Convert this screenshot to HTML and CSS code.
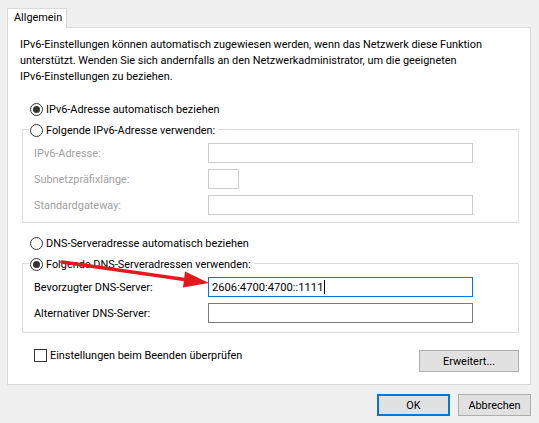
FILE: index.html
```html
<!DOCTYPE html>
<html lang="de">
<head>
  <meta charset="UTF-8">
  <title>Eigenschaften von Internetprotokoll, Version 6 (TCP/IPv6)</title>
  <link rel="stylesheet" href="styles.css">
</head>
<body>
  <div class="dialog">
    <div class="tabs">
      <div class="tab">Allgemein</div>
    </div>

    <div class="panel">
      <p class="intro">
        IPv6-Einstellungen können automatisch zugewiesen werden, wenn das Netzwerk diese Funktion<br>
        unterstützt. Wenden Sie sich andernfalls an den Netzwerkadministrator, um die geeigneten<br>
        IPv6-Einstellungen zu beziehen.
      </p>

      <div class="option first"><span class="radio checked"></span>IPv6-Adresse automatisch beziehen</div>

      <div class="group">
        <div class="option legend"><span class="radio"></span>Folgende IPv6-Adresse verwenden:</div>
        <div class="field disabled">
          <span class="field-label">IPv6-Adresse:</span>
          <span class="input"></span>
        </div>
        <div class="field disabled">
          <span class="field-label">Subnetzpräfixlänge:</span>
          <span class="input short"></span>
        </div>
        <div class="field disabled">
          <span class="field-label">Standardgateway:</span>
          <span class="input"></span>
        </div>
      </div>

      <div class="option dns"><span class="radio"></span>DNS-Serveradresse automatisch beziehen</div>

      <div class="group last">
        <div class="option legend"><span class="radio checked"></span>Folgende DNS-Serveradressen verwenden:</div>
        <div class="field">
          <span class="field-label">Bevorzugter DNS-Server:</span>
          <span class="input focused">2606:4700:4700::1111<span class="caret"></span></span>
        </div>
        <div class="field">
          <span class="field-label">Alternativer DNS-Server:</span>
          <span class="input active"></span>
        </div>
      </div>

      <div class="bottom-row">
        <div class="check"><span class="checkbox"></span>Einstellungen beim Beenden überprüfen</div>
        <button class="btn advanced">Erweitert...</button>
      </div>
    </div>

    <div class="actions">
      <button class="btn default">OK</button>
      <button class="btn">Abbrechen</button>
    </div>
  </div>

  <!-- annotation arrow pointing at the preferred DNS field -->
  <svg class="arrow" width="539" height="423" viewBox="0 0 539 423">
    <line x1="62" y1="262" x2="188" y2="280" stroke="#e3191f" stroke-width="3.5" stroke-linecap="round"/>
    <polygon points="185,271.5 209,283 183,287.5" fill="#e3191f"/>
  </svg>
</body>
</html>
```

FILE: styles.css
```css
* {
  margin: 0;
  padding: 0;
  box-sizing: border-box;
}

body {
  width: 539px;
  height: 423px;
  background: #f0f0f0;
  font-family: Roboto, "Open Sans", sans-serif;
  font-size: 10.9px;
  color: #000;
  position: relative;
  overflow: hidden;
}

.dialog {
  padding: 8px 8px 0 7px;
}

/* Tab strip */
.tabs {
  display: flex;
  position: relative;
  z-index: 1;
  margin-bottom: -1px;
}

.tab {
  width: 60px;
  height: 20px;
  background: #fff;
  border: 1px solid #d9d9d9;
  border-bottom: none;
  padding-left: 6px;
  line-height: 18px;
}

/* White property page */
.panel {
  background: #fff;
  border: 1px solid #d9d9d9;
  width: 524px;
  padding: 0 11px 12px 14px;
}

.intro {
  margin: 9px 0 0 -2px;
  line-height: 16px;
}

.option {
  display: flex;
  align-items: center;
  height: 16px;
  padding-left: 8px;
}

.option.first {
  margin-top: 16px;
}

.option.dns {
  margin-top: 12px;
}

.radio {
  width: 13px;
  height: 13px;
  border: 1px solid #333;
  border-radius: 50%;
  background: #fff;
  margin-right: 3px;
  display: flex;
  align-items: center;
  justify-content: center;
  flex-shrink: 0;
}

.radio.checked::after {
  content: '';
  width: 7px;
  height: 7px;
  border-radius: 50%;
  background: #333;
}

/* Grouped settings with a radio sitting on the frame */
.group {
  border: 1px solid #dcdcdc;
  margin-top: 12px;
  padding: 0 45px 7px 11px;
}

.group.last {
  padding-bottom: 9px;
}

.option.legend {
  align-self: flex-start;
  width: max-content;
  background: #fff;
  margin: -8px 0 0 -5px;
  padding: 0 3px 0 1px;
}

.field {
  display: flex;
  align-items: center;
  margin-top: 6px;
}

.option.legend + .field {
  margin-top: 5px;
}

.field-label {
  width: 174px;
}

.field.disabled .field-label {
  color: #a0a0a0;
}

.input {
  display: flex;
  align-items: center;
  width: 265px;
  height: 20px;
  border: 1px solid #cccccc;
  background: #fff;
  padding-left: 3px;
  font-size: 11.2px;
}

.input.short {
  width: 31px;
}

.input.active {
  border-color: #7a7a7a;
}

.input.focused {
  border-color: #0078d7;
}

.caret {
  width: 1px;
  height: 14px;
  background: #000;
  margin-left: 1px;
}

.bottom-row {
  display: flex;
  justify-content: space-between;
  align-items: flex-start;
  margin-top: 16px;
  padding-left: 12px;
}

.check {
  display: flex;
  align-items: center;
  height: 13px;
}

.checkbox {
  width: 13px;
  height: 13px;
  border: 1px solid #333;
  background: #fff;
  margin-right: 3px;
}

.btn {
  font: inherit;
  color: #000;
  background: #e1e1e1;
  border: 1px solid #adadad;
  height: 22px;
  width: 73px;
}

.btn.advanced {
  width: 100px;
  margin-top: 1px;
}

.btn.default {
  border: 2px solid #0078d7;
}

.actions {
  display: flex;
  justify-content: flex-end;
  gap: 8px;
  margin-top: 9px;
}

.arrow {
  position: absolute;
  top: 0;
  left: 0;
  pointer-events: none;
}
```
